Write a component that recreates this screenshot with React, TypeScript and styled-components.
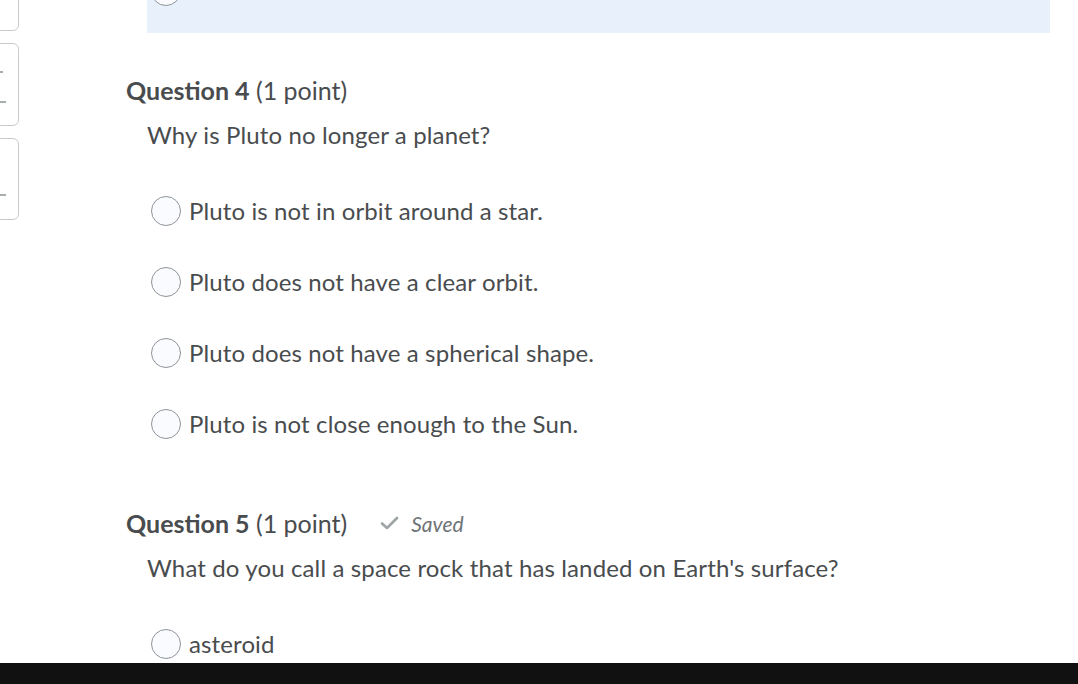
import React from "react";
import styled, { createGlobalStyle } from "styled-components";

const GlobalStyle = createGlobalStyle`
  html, body {
    margin: 0;
    padding: 0;
    background: #ffffff;
    overflow: hidden;
  }
  body {
    font-family: Lato, "Noto Sans", sans-serif;
    color: #494c4e;
  }
`;

const questions = [
  {
    number: 4,
    points: "(1 point)",
    saved: false,
    text: "Why is Pluto no longer a planet?",
    options: [
      "Pluto is not in orbit around a star.",
      "Pluto does not have a clear orbit.",
      "Pluto does not have a spherical shape.",
      "Pluto is not close enough to the Sun.",
    ],
  },
  {
    number: 5,
    points: "(1 point)",
    saved: true,
    text: "What do you call a space rock that has landed on Earth's surface?",
    options: ["asteroid"],
  },
];

function CheckIcon() {
  return (
    <svg width="19" height="14" viewBox="0 0 19 14" aria-hidden="true">
      <path
        d="M2 7.5 L7 12 L17 2"
        fill="none"
        stroke="#9ea3a6"
        strokeWidth="2.6"
        strokeLinecap="round"
        strokeLinejoin="round"
      />
    </svg>
  );
}

function Option({ label }: { label?: string }) {
  return (
    <OptionRow>
      <Radio />
      {label && <OptionLabel>{label}</OptionLabel>}
    </OptionRow>
  );
}

export default function App() {
  return (
    <>
      <GlobalStyle />
      <Screen>
        <Page>
          <Sidebar>
            <NavBox $height={90}>
              <NavMark $top={40} $width={4} />
            </NavBox>
            <NavBox $height={83}>
              <NavMark $top={27} $width={3} />
              <NavMark $top={57} $width={6} />
            </NavBox>
            <NavBox $height={82}>
              <NavMark $top={55} $width={6} />
            </NavBox>
          </Sidebar>
          <Content>
            <SelectedBlock>
              <Option />
            </SelectedBlock>
            {questions.map((q) => (
              <Question key={q.number}>
                <Heading>
                  <Title>
                    <strong>Question {q.number}</strong> {q.points}
                  </Title>
                  {q.saved && (
                    <SavedTag>
                      <CheckIcon />
                      <SavedText>Saved</SavedText>
                    </SavedTag>
                  )}
                </Heading>
                <Prompt>{q.text}</Prompt>
                <OptionList>
                  {q.options.map((o) => (
                    <Option key={o} label={o} />
                  ))}
                </OptionList>
              </Question>
            ))}
          </Content>
        </Page>
        <BottomBar />
      </Screen>
    </>
  );
}

const Screen = styled.div`
  height: 684px;
  display: flex;
  flex-direction: column;
`;

const Page = styled.div`
  flex: 1;
  min-height: 0;
  overflow: hidden;
  display: flex;
`;

const Sidebar = styled.div`
  width: 20px;
  flex-shrink: 0;
  display: flex;
  flex-direction: column;
  gap: 12px;
  margin-top: -59px;
`;

const NavBox = styled.div<{ $height: number }>`
  position: relative;
  width: 40px;
  height: ${({ $height }) => $height}px;
  margin-left: -21px;
  border: 1px solid #c7cbcf;
  border-radius: 6px;
  box-sizing: border-box;
  flex-shrink: 0;
`;

const NavMark = styled.div<{ $top: number; $width: number }>`
  position: absolute;
  left: 20px;
  top: ${({ $top }) => $top}px;
  width: ${({ $width }) => $width}px;
  height: 2px;
  background: #a8adb0;
`;

const Content = styled.div`
  margin-left: 106px;
  margin-top: -42px;
  width: 924px;
  display: flex;
  flex-direction: column;
`;

const SelectedBlock = styled.div`
  margin-left: 21px;
  width: 903px;
  background: #e8f1fb;
  padding: 18px 0 27px 4px;
  box-sizing: border-box;
`;

const Question = styled.section`
  margin-top: 42px;
  & + & {
    margin-top: 69px;
  }
`;

const Heading = styled.div`
  display: flex;
  align-items: center;
  gap: 33px;
  height: 30px;
`;

const Title = styled.h2`
  margin: 0;
  font-size: 25px;
  font-weight: 400;
  line-height: 30px;
  color: #494c4e;

  strong {
    font-weight: 700;
  }
`;

const SavedTag = styled.div`
  display: flex;
  align-items: center;
  gap: 12px;
`;

const SavedText = styled.span`
  font-size: 21px;
  font-style: italic;
  color: #6e7376;
`;

const Prompt = styled.p`
  margin: 15px 0 0 21px;
  font-size: 24px;
  line-height: 30px;
  letter-spacing: 0.13px;
`;

const OptionList = styled.div`
  margin: 46px 0 0 25px;
  display: flex;
  flex-direction: column;
  gap: 41px;
`;

const OptionRow = styled.label`
  display: flex;
  align-items: center;
  gap: 8px;
  height: 30px;
`;

const Radio = styled.span`
  width: 28px;
  height: 28px;
  border-radius: 50%;
  border: 1px solid #8f9498;
  background: #f9fbff;
  flex-shrink: 0;
`;

const OptionLabel = styled.span`
  font-size: 24px;
  line-height: 30px;
  letter-spacing: 0.12px;
  color: #494c4e;
`;

const BottomBar = styled.div`
  height: 21px;
  flex-shrink: 0;
  background: #111111;
`;
